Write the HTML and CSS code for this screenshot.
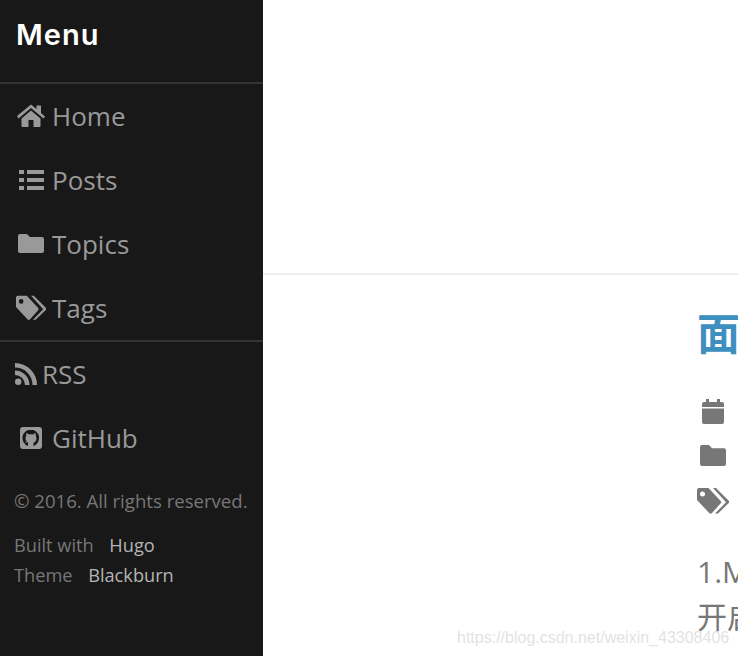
FILE: index.html
```html
<!DOCTYPE html>
<html lang="en">
  <head>
    <meta charset="UTF-8" />
    <title>Blog</title>
    <link rel="stylesheet" href="styles.css">
  </head>
  <body>
    <aside class="sidebar">
      <div class="menu-heading">Menu</div>
      <nav class="menu-group">
        <a class="menu-link" href="#">
          <span class="menu-icon">
            <svg width="28" height="23" viewBox="0 0 28 23" fill="currentColor"><path d="M0 12 14 .5l5.500 4.500V1.500H24V9l4 3.500-1.500 2L14 4 1.500 14.500z"/><path d="M4.500 14.500 14 6.500l9.500 8V22a1 1 0 0 1-1 1h-6v-7h-5v7h-6a1 1 0 0 1-1-1z"/></svg>
          </span>
          Home
        </a>
        <a class="menu-link" href="#">
          <span class="menu-icon">
            <svg width="25" height="21" viewBox="0 0 25 21" fill="currentColor"><path d="M0 1h5v4H0zM8 1h17v4H8zM0 9h5v4H0zM8 9h17v4H8zM0 17h5v4H0zM8 17h17v4H8z"/></svg>
          </span>
          Posts
        </a>
        <a class="menu-link" href="#">
          <span class="menu-icon">
            <svg width="26" height="19" viewBox="0 0 26 19" fill="currentColor"><path d="M2 0h7l3 3h12a2 2 0 0 1 2 2v12a2 2 0 0 1-2 2H2a2 2 0 0 1-2-2V2a2 2 0 0 1 2-2z"/></svg>
          </span>
          Topics
        </a>
        <a class="menu-link" href="#">
          <span class="menu-icon">
            <svg width="32" height="26" viewBox="0 0 32 26" fill="currentColor"><path fill-rule="evenodd" d="M2 0h9.500l12 12.800a2 2 0 0 1 0 2.800L15 25a2 2 0 0 1-2.800 0L0 12V2a2 2 0 0 1 2-2zm3.500 3.500a2.500 2.500 0 1 0 0 5 2.500 2.500 0 0 0 0-5z"/><path d="M16 0h3l12.500 12.500a2 2 0 0 1 0 2.800L21 25.500h-3L29 14.300z"/></svg>
          </span>
          Tags
        </a>
      </nav>
      <nav class="menu-group">
        <a class="menu-link menu-link-rss" href="#">
          <span class="menu-icon">
            <svg width="22" height="22" viewBox="0 0 22 22" fill="currentColor"><circle cx="3.200" cy="18.800" r="3.200"/><path d="M0 7.500V12a10 10 0 0 1 10 10h4.500A14.500 14.500 0 0 0 0 7.500z"/><path d="M0 0v4.500A17.500 17.500 0 0 1 17.500 22H22A22 22 0 0 0 0 0z"/></svg>
          </span>
          RSS
        </a>
        <a class="menu-link" href="#">
          <span class="menu-icon">
            <svg width="22" height="22" viewBox="0 0 22 22" fill="currentColor"><rect width="22" height="22" rx="3"/><path fill="#191818" d="M11 2.500a8.500 8.500 0 0 0-3 16.500v-3c-1.200.2-2.300-.1-3-1.500.8.200 1.500.7 2 1.300.5.300 1 .3 1.500.1-2-1-3-2.500-3-4.600 0-1 .3-1.800.8-2.500-.2-.8-.2-1.600.2-2.500 1 .1 1.800.5 2.500 1.100a8 8 0 0 1 4 0c.7-.6 1.500-1 2.500-1.100.4.900.4 1.700.2 2.500.5.700.8 1.500.8 2.500 0 2.100-1 3.600-3 4.600V19a8.500 8.500 0 0 0-3-16.500z"/></svg>
          </span>
          GitHub
        </a>
      </nav>
      <footer class="sidebar-footer">
        <p class="copyright">© 2016. All rights reserved.</p>
        <p class="credit">Built with <a href="#">Hugo</a></p>
        <p class="credit">Theme <a href="#">Blackburn</a></p>
      </footer>
    </aside>

    <main class="main">
      <div class="page-header"></div>
      <article class="post">
        <h1 class="post-title">面试</h1>
        <div class="post-meta">
          <span class="meta-icon">
            <svg width="22" height="25" viewBox="0 0 22 25" fill="currentColor"><path d="M4 0h3v3h8V0h3v3h2a2 2 0 0 1 2 2v3H0V5a2 2 0 0 1 2-2h2z"/><path d="M0 9.500h22V23a2 2 0 0 1-2 2H2a2 2 0 0 1-2-2z"/></svg>
          </span>
          <span class="meta-icon">
            <svg width="26" height="21" viewBox="0 0 26 19" fill="currentColor" preserveAspectRatio="none"><path d="M2 0h7l3 3h12a2 2 0 0 1 2 2v12a2 2 0 0 1-2 2H2a2 2 0 0 1-2-2V2a2 2 0 0 1 2-2z"/></svg>
          </span>
          <span class="meta-icon meta-icon-tags">
            <svg width="32" height="26" viewBox="0 0 32 26" fill="currentColor"><path fill-rule="evenodd" d="M2 0h9.500l12 12.800a2 2 0 0 1 0 2.800L15 25a2 2 0 0 1-2.800 0L0 12V2a2 2 0 0 1 2-2zm3.500 3.500a2.500 2.500 0 1 0 0 5 2.500 2.500 0 0 0 0-5z"/><path d="M16 0h3l12.500 12.500a2 2 0 0 1 0 2.800L21 25.500h-3L29 14.300z"/></svg>
          </span>
        </div>
        <p class="post-body">1.MySQL</p>
        <p class="post-body">开启事务</p>
      </article>
    </main>

    <div class="watermark">https://blog.csdn.net/weixin_43308406</div>
  </body>
</html>
```

FILE: styles.css
```css
html, body {
  height: 100%;
}
body {
  margin: 0;
  display: flex;
  overflow: hidden;
  background-color: #fff;
  font-family: "Open Sans", "Noto Sans CJK SC", sans-serif;
}
a {
  text-decoration: none;
}
.sidebar {
  width: 263px;
  flex-shrink: 0;
  background-color: #191818;
}
.menu-heading {
  height: 82px;
  box-sizing: border-box;
  padding: 14px 0 0 16px;
  font-family: "Inter", sans-serif;
  font-size: 29px;
  line-height: 42px;
  font-weight: 600;
  letter-spacing: 1px;
  color: #fff;
}
.menu-group {
  border-top: 2px solid #333;
}
.menu-link {
  display: flex;
  align-items: center;
  height: 64px;
  padding-left: 16px;
  padding-bottom: 1px;
  box-sizing: border-box;
  font-size: 26px;
  color: #999;
}
.menu-icon {
  width: 30px;
  margin-right: 6px;
  display: flex;
  justify-content: center;
}
.menu-link-rss {
  padding-left: 15px;
}
.menu-link-rss .menu-icon {
  width: 22px;
  margin-right: 5px;
}
.sidebar-footer {
  padding: 18px 0 0 14px;
  font-size: 18.600px;
  color: #777;
}
.sidebar-footer p {
  margin: 0;
}
.sidebar-footer .copyright {
  line-height: 26px;
  margin-bottom: 16px;
}
.sidebar-footer .credit {
  font-size: 18.200px;
  line-height: 30px;
}
.credit a {
  margin-left: 11px;
  color: #b4b4b4;
}
.main {
  flex: 1;
  min-width: 0;
  overflow: hidden;
}
.page-header {
  height: 273px;
  border-bottom: 2px solid #eee;
}
.post {
  padding: 34px 0 0 434px;
  white-space: nowrap;
}
.post-title {
  margin: 0 0 40px;
  font-size: 43px;
  line-height: 50px;
  font-weight: 700;
  color: #3d8fc0;
}
.post-meta {
  display: flex;
  flex-direction: column;
  gap: 21px;
  width: 32px;
  color: #777;
}
.meta-icon {
  display: flex;
  justify-content: center;
}
.meta-icon-tags {
  margin-top: 1px;
}
.post-body {
  margin: 0;
  font-size: 30px;
  line-height: 45px;
  color: #777;
}
.post-meta + .post-body {
  margin-top: 35px;
}
.watermark {
  position: absolute;
  left: 457px;
  top: 628px;
  font-family: "Liberation Sans", sans-serif;
  font-size: 16px;
  line-height: 20px;
  color: rgba(180, 180, 180, 0.4);
}
```
